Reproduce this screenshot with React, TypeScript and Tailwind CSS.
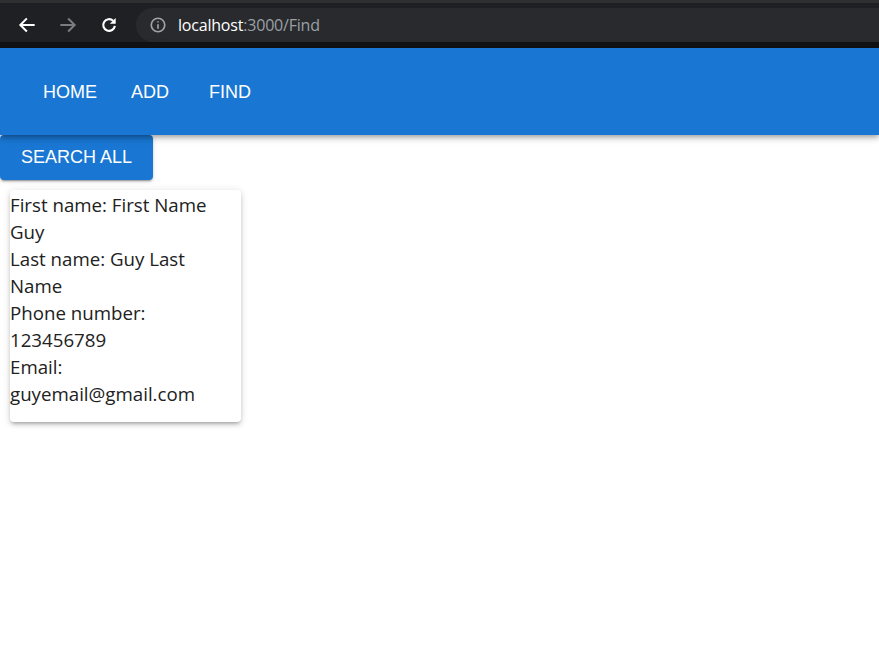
const navItems = ["HOME", "ADD", "FIND"];

const contact = [
  "First name: First Name Guy",
  "Last name: Guy Last Name",
  "Phone number: 123456789",
  "Email: guyemail@gmail.com",
];

function BrowserBar() {
  return (
    <div className="h-[48px] bg-[#1f2023] flex flex-col">
      <div className="h-[3px] bg-[#2e2f31]" />
      <div className="flex-1 flex items-center pt-[4px]">
        <div className="flex items-center pl-[17px] gap-[21px] text-white">
          <svg width="20" height="20" viewBox="0 0 24 24" fill="none" stroke="currentColor" strokeWidth="2.4" strokeLinecap="square">
            <path d="M20 12H5M11 5l-7 7 7 7" />
          </svg>
          <svg width="20" height="20" viewBox="0 0 24 24" fill="none" stroke="#7b7c7e" strokeWidth="2.4" strokeLinecap="square">
            <path d="M4 12h15M13 5l7 7-7 7" />
          </svg>
          <svg width="20" height="20" viewBox="0 0 24 24" fill="none" stroke="currentColor" strokeWidth="2.6">
            <path d="M19 13a7 7 0 1 1-2.1-6" />
            <path d="M20 3.5v7h-7z" fill="currentColor" stroke="none" />
          </svg>
        </div>
        <div className="ml-[17px] flex-1 h-[34px] bg-[#292a2d] rounded-l-full flex items-center pl-[13px]">
          <svg width="18" height="18" viewBox="0 0 24 24" fill="none" stroke="#a0a3a7" strokeWidth="2.2">
            <circle cx="12" cy="12" r="9" />
            <path d="M12 11v6M12 7v1.5" />
          </svg>
          <span className="ml-[11px] text-[16px] font-['Open_Sans',sans-serif] tracking-[-0.2px]">
            <span className="text-white">localhost</span>
            <span className="text-[#9aa0a6]">:3000/Find</span>
          </span>
        </div>
      </div>
      <div className="h-[6px] bg-[#111213]" />
    </div>
  );
}

export default function App() {
  return (
    <div className="w-[879px] h-[660px] bg-white overflow-hidden">
      <BrowserBar />
      <header className="h-[87px] bg-[#1976d2] flex items-center pt-[2px] shadow-[0_2px_4px_-1px_rgba(0,0,0,0.2),0_4px_5px_0_rgba(0,0,0,0.14),0_1px_10px_0_rgba(0,0,0,0.12)] relative z-10">
        <nav className="flex items-center pl-[43px] gap-[34px] font-['Liberation_Sans',Arial,sans-serif] text-[18px] text-white">
          {navItems.map((name, i) => (
            <span key={name} className={i === 2 ? "ml-[6px]" : ""}>
              {name}
            </span>
          ))}
        </nav>
      </header>
      <button className="w-[153px] h-[45px] bg-[#1976d2] text-white rounded-[4px] font-['Liberation_Sans',Arial,sans-serif] text-[18px] shadow-[0_3px_1px_-2px_rgba(0,0,0,0.2),0_2px_2px_0_rgba(0,0,0,0.14),0_1px_5px_0_rgba(0,0,0,0.12)]">
        SEARCH ALL
      </button>
      <div className="ml-[10px] mt-[10px] w-[231px] rounded-[4px] bg-white shadow-[0_3px_3px_-2px_rgba(0,0,0,0.2),0_3px_4px_0_rgba(0,0,0,0.14),0_1px_8px_0_rgba(0,0,0,0.12)] pt-[1px] pb-[15px] font-['Open_Sans',sans-serif] text-[18.7px] leading-[27px] text-[#212121]">
        {contact.map((line) => (
          <div key={line}>{line}</div>
        ))}
      </div>
    </div>
  );
}
